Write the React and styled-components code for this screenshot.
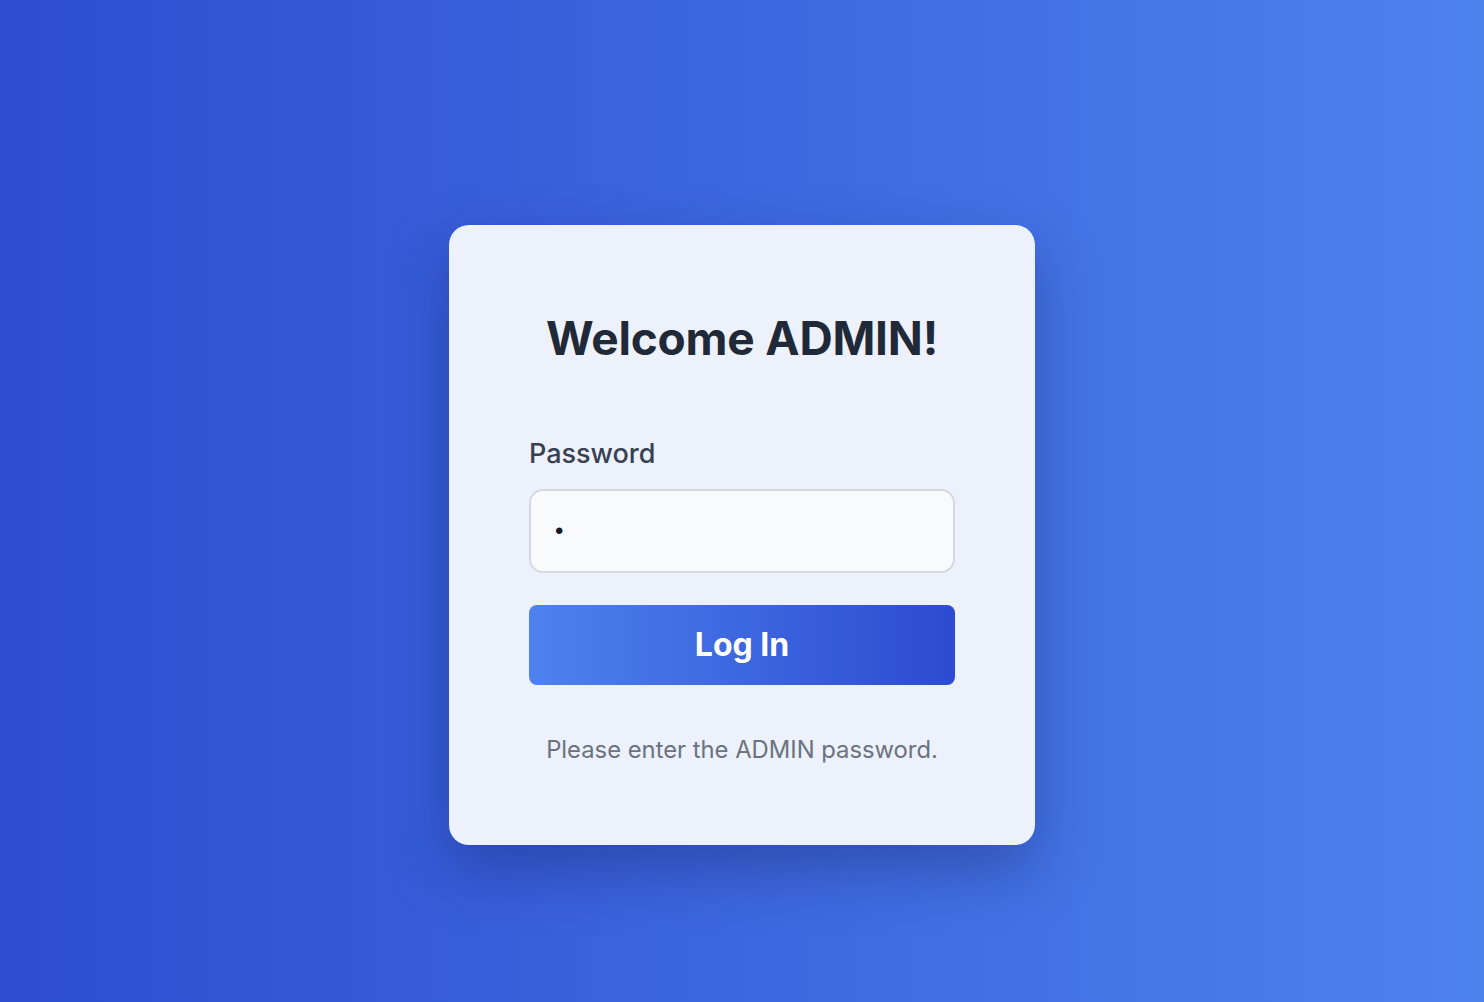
import styled, { createGlobalStyle } from 'styled-components';

const GlobalStyle = createGlobalStyle`
  html, body, #root {
    margin: 0;
    height: 100%;
  }
  body {
    font-family: Inter, "Noto Sans", "Liberation Sans", sans-serif;
  }
`;

export default function App() {
  return (
    <>
      <GlobalStyle />
      <Page>
        <Card>
          <Title>Welcome ADMIN!</Title>
          <Field>
            <Label htmlFor="password">Password</Label>
            <PasswordInput id="password" type="password" defaultValue="a" />
          </Field>
          <LoginButton type="button">Log In</LoginButton>
          <Hint>Please enter the ADMIN password.</Hint>
        </Card>
      </Page>
    </>
  );
}

const Page = styled.div`
  min-height: 100vh;
  box-sizing: border-box;
  padding-top: 67px;
  display: flex;
  align-items: center;
  justify-content: center;
  background: linear-gradient(90deg, #2c4dd1 0%, #4e82ed 100%);
`;

const Card = styled.div`
  width: 586px;
  box-sizing: border-box;
  padding: 86px 80px 77px;
  background: #edf1fb;
  border-radius: 20px;
  box-shadow: 0 25px 60px rgba(15, 30, 90, 0.35);
  display: flex;
  flex-direction: column;
`;

const Title = styled.h1`
  margin: 0;
  text-align: center;
  font-size: 46px;
  line-height: 54px;
  font-weight: 700;
  letter-spacing: -0.2px;
  color: #1f2937;
`;

const Field = styled.div`
  margin-top: 71px;
  display: flex;
  flex-direction: column;
  gap: 17px;
`;

const Label = styled.label`
  font-size: 27px;
  line-height: 36px;
  font-weight: 500;
  color: #374151;
`;

const PasswordInput = styled.input`
  height: 84px;
  box-sizing: border-box;
  padding: 0 24px;
  border: 2px solid #d5d9e0;
  border-radius: 14px;
  background: #f9fafb;
  font-size: 24px;
  color: #111827;
  outline: none;
`;

const LoginButton = styled.button`
  margin-top: 32px;
  height: 80px;
  border: none;
  border-radius: 8px;
  background: linear-gradient(90deg, #4e82ed 0%, #2c4bd1 100%);
  color: #fff;
  font-family: inherit;
  font-size: 32px;
  font-weight: 700;
  cursor: pointer;
`;

const Hint = styled.p`
  margin: 47px 0 0;
  text-align: center;
  font-size: 23.8px;
  line-height: 36px;
  color: #6b7280;
`;
